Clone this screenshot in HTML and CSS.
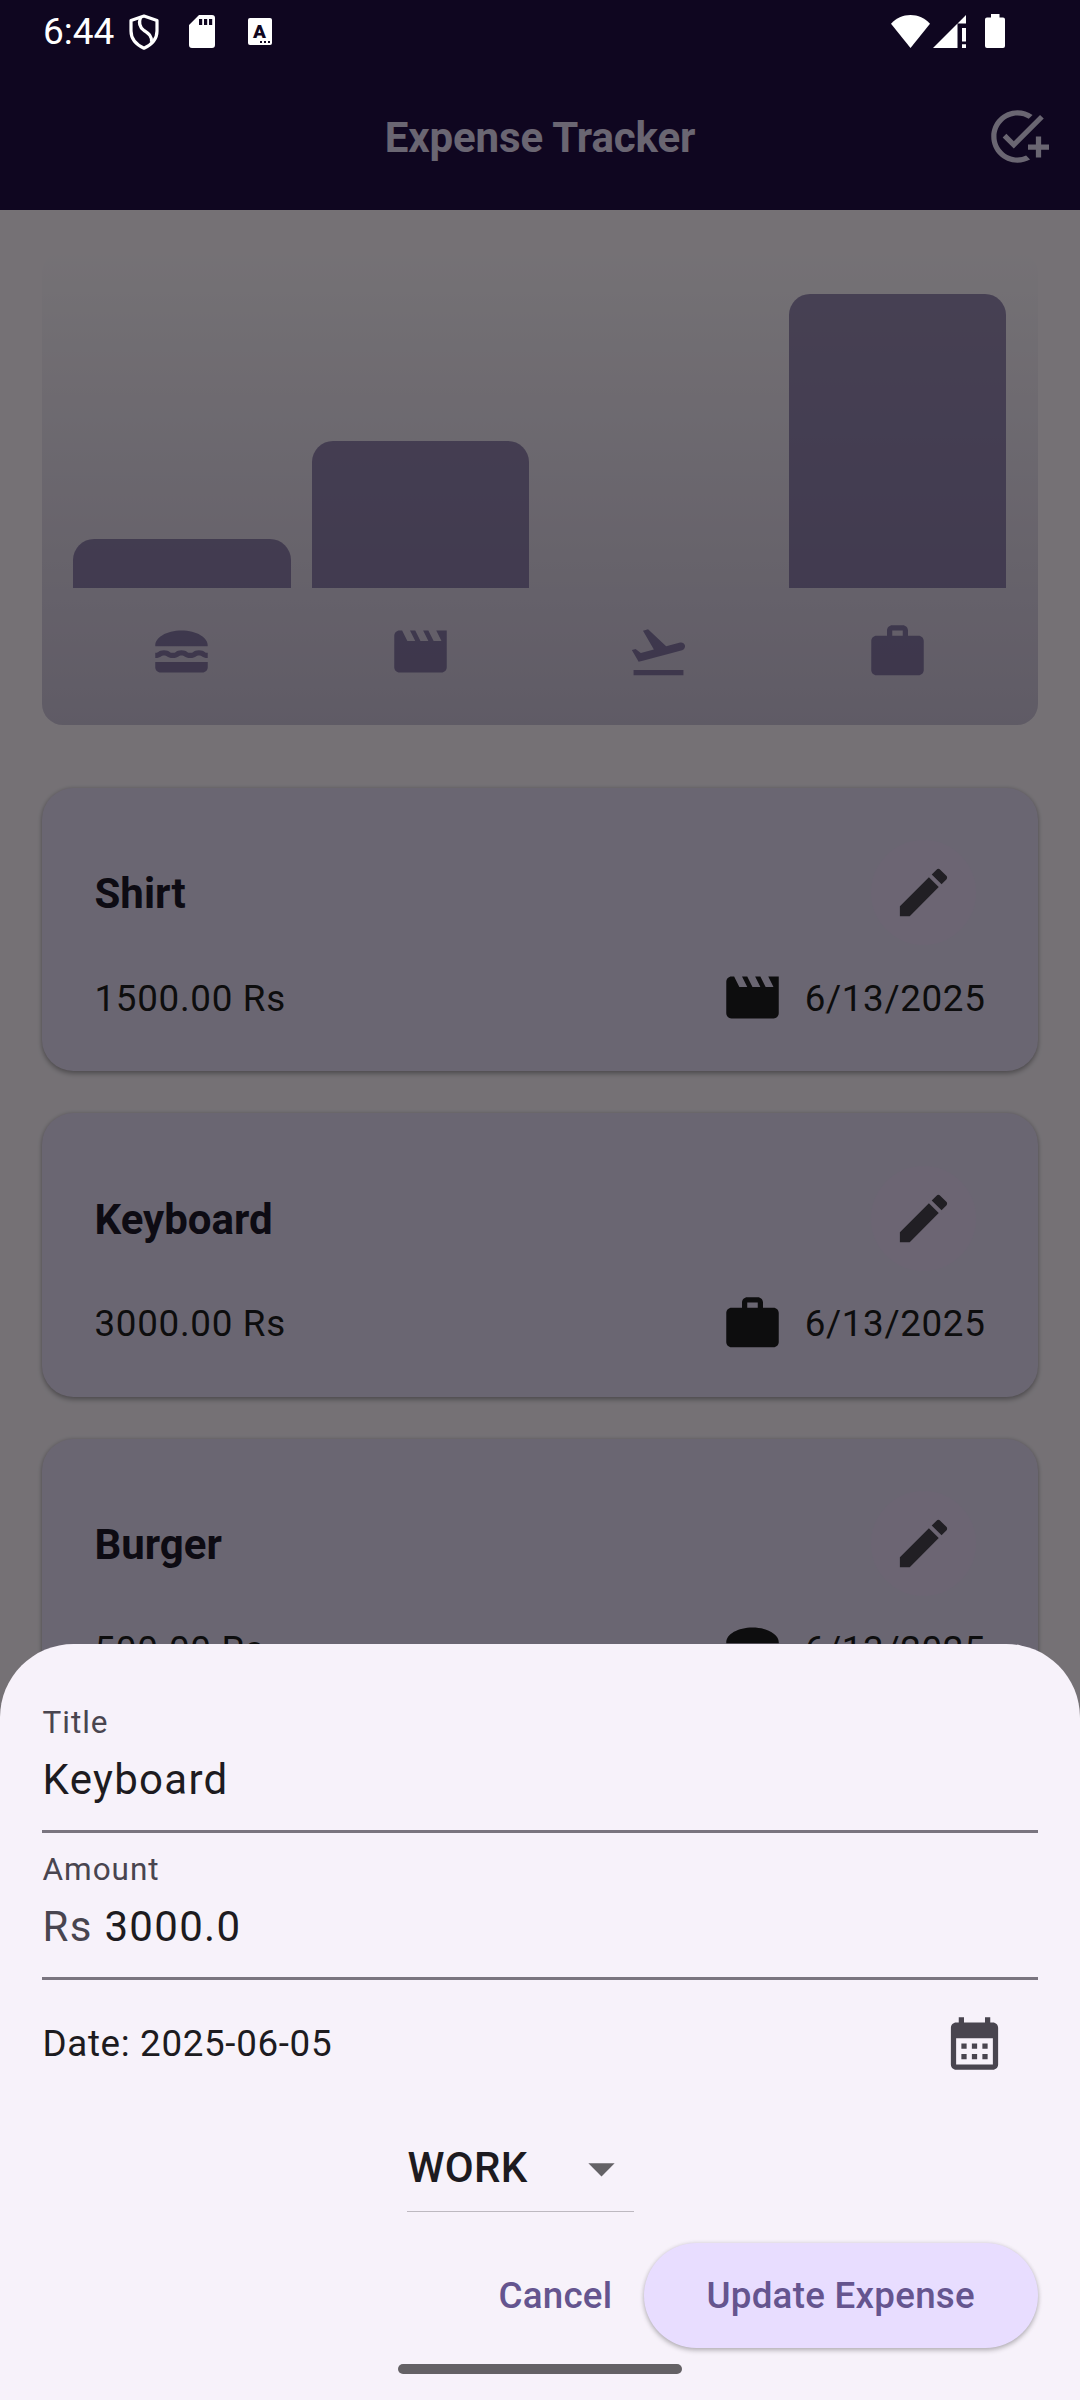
FILE: index.html
```html
<!DOCTYPE html>
<html lang="en">
<head>
<meta charset="utf-8">
<title>Expense Tracker</title>
<link rel="stylesheet" href="styles.css">
</head>
<body>
<svg class="symbols" width="0" height="0" aria-hidden="true">
  <symbol id="i-food" viewBox="0 0 24 24"><path d="M22 10c.32-3.28-4.28-6-9.99-6S1.7 6.72 2.02 10H22zM5.35 13.5c.55 0 .78.14 1.15.36.45.27 1.07.64 2.18.64s1.73-.37 2.18-.64c.37-.23.59-.36 1.15-.36.55 0 .78.14 1.15.36.45.27 1.07.64 2.18.64s1.73-.37 2.18-.64c.37-.23.59-.36 1.15-.36.55 0 .78.14 1.15.36.45.27 1.07.63 2.17.64v-1.98s0 .01-.01 0c-.55 0-.78-.14-1.15-.36-.45-.27-1.07-.64-2.18-.64s-1.73.37-2.18.64c-.37.23-.6.36-1.15.36s-.78-.14-1.15-.36c-.45-.27-1.07-.64-2.18-.64s-1.73.37-2.18.64c-.37.23-.59.36-1.15.36s-.78-.14-1.15-.36c-.45-.27-1.07-.64-2.18-.64s-1.73.37-2.18.64C2.78 12.37 2.56 12.5 2 12.5v2c1.11 0 1.73-.37 2.21-.64.36-.23.59-.36 1.14-.36zM2 16v2c0 1.1.9 2 2 2h16c1.1 0 2-.9 2-2v-2H2z"/></symbol>
  <symbol id="i-movie" viewBox="0 0 24 24"><path d="M18 4l2 4h-3l-2-4h-2l2 4h-3l-2-4H8l2 4H7L5 4H4c-1.1 0-1.99.9-1.99 2L2 18c0 1.1.9 2 2 2h16c1.1 0 2-.9 2-2V4h-4z"/></symbol>
  <symbol id="i-flight" viewBox="0 0 24 24"><path d="M2.5 19h19v2h-19zm19.57-9.36c-.21-.8-1.04-1.28-1.84-1.06L14.92 10l-6.9-6.43-1.93.51 4.14 7.17-4.97 1.33-1.97-1.54-1.45.39 1.82 3.16.77 1.33 1.6-.43 5.31-1.42 4.35-1.16L21 11.49c.81-.23 1.28-1.05 1.07-1.85z"/></symbol>
  <symbol id="i-work" viewBox="0 0 24 24"><path d="M20 6h-4V4c0-1.11-.89-2-2-2h-4c-1.11 0-2 .89-2 2v2H4c-1.11 0-1.99.89-1.99 2L2 19c0 1.11.89 2 2 2h16c1.11 0 2-.89 2-2V8c0-1.11-.89-2-2-2zm-6 0h-4V4h4v2z"/></symbol>
  <symbol id="i-edit" viewBox="0 0 24 24"><path d="M3 17.25V21h3.75L17.81 9.94l-3.75-3.75L3 17.25zM20.71 7.04c.39-.39.39-1.02 0-1.41l-2.34-2.34c-.39-.39-1.02-.39-1.41 0l-1.83 1.83 3.75 3.75 1.83-1.83z"/></symbol>
  <symbol id="i-add-task" viewBox="0 0 24 24"><path d="M22 5.18L10.59 16.6l-4.24-4.24 1.41-1.41 2.83 2.83 10-10L22 5.18zM12 20c-4.41 0-8-3.59-8-8s3.59-8 8-8c1.57 0 3.04.46 4.28 1.25l1.45-1.45C16.1 2.67 14.13 2 12 2 6.48 2 2 6.48 2 12s4.48 10 10 10c1.73 0 3.36-.44 4.78-1.22l-1.5-1.5c-1 .46-2.11.72-3.28.72zm7-5h-3v2h3v3h2v-3h3v-2h-3v-3h-2v3z"/></symbol>
  <symbol id="i-calendar" viewBox="0 0 24 24"><path d="M19 4h-1V2h-2v2H8V2H6v2H5c-1.11 0-1.99.9-1.99 2L3 20c0 1.1.89 2 2 2h14c1.1 0 2-.9 2-2V6c0-1.1-.9-2-2-2zm0 16H5V10h14v10zM9 14H7v-2h2v2zm4 0h-2v-2h2v2zm4 0h-2v-2h2v2zm-8 4H7v-2h2v2zm4 0h-2v-2h2v2zm4 0h-2v-2h2v2z"/></symbol>
  <symbol id="i-drop" viewBox="0 0 24 24"><path d="M7 10l5 5 5-5z"/></symbol>
</svg>

<div class="screen">
  <header class="app-bar">
    <h1 class="app-title">Expense Tracker</h1>
    <svg class="icon app-action"><use href="#i-add-task"/></svg>
  </header>

  <main class="content">
    <section class="chart">
      <div class="bars">
        <div class="bar" style="height:16.667%"></div>
        <div class="bar" style="height:50%"></div>
        <div class="bar" style="height:0%"></div>
        <div class="bar" style="height:100%"></div>
      </div>
      <div class="categories">
        <svg class="icon"><use href="#i-food"/></svg>
        <svg class="icon"><use href="#i-movie"/></svg>
        <svg class="icon"><use href="#i-flight"/></svg>
        <svg class="icon"><use href="#i-work"/></svg>
      </div>
    </section>

    <article class="card">
      <div class="card-head">
        <h2 class="card-title">Shirt</h2>
        <div class="edit"><svg class="icon"><use href="#i-edit"/></svg></div>
      </div>
      <div class="card-row">
        <span class="amount">1500.00 Rs</span>
        <svg class="icon"><use href="#i-movie"/></svg>
        <span class="date">6/13/2025</span>
      </div>
    </article>

    <article class="card">
      <div class="card-head">
        <h2 class="card-title">Keyboard</h2>
        <div class="edit"><svg class="icon"><use href="#i-edit"/></svg></div>
      </div>
      <div class="card-row">
        <span class="amount">3000.00 Rs</span>
        <svg class="icon"><use href="#i-work"/></svg>
        <span class="date">6/13/2025</span>
      </div>
    </article>

    <article class="card">
      <div class="card-head">
        <h2 class="card-title">Burger</h2>
        <div class="edit"><svg class="icon"><use href="#i-edit"/></svg></div>
      </div>
      <div class="card-row">
        <span class="amount">500.00 Rs</span>
        <svg class="icon"><use href="#i-food"/></svg>
        <span class="date">6/13/2025</span>
      </div>
    </article>
  </main>

  <div class="scrim"></div>

  <div class="status-bar">
    <span class="clock">6:44</span>
    <svg class="st-shield" width="30" height="36" viewBox="0 0 30 36" fill="none" stroke="#fff" stroke-width="3.2" stroke-linejoin="round"><path d="M15 2L28 6.500V17C28 25 22 31 15 34.200C8 31 2 25 2 17V6.500Z"/><path d="M11.500 3.500C9.500 9 10 13 15 16.500C20 20 23 22 22.500 28"/></svg>
    <svg class="st-sd" width="26" height="33" viewBox="0 0 26 33"><path fill="#fff" fill-rule="evenodd" d="M10 0H23Q26 0 26 3V30Q26 33 23 33H3Q0 33 0 30V10ZM10 4V10H13.200V4ZM15 4V10H18.200V4ZM20 4V10H23.200V4Z"/></svg>
    <span class="st-lang">A<i class="st-dots"></i></span>
    <span class="st-gap"></span>
    <svg class="st-wifi" width="39" height="33" viewBox="0 0 39 33"><path fill="#fff" d="M19.500 33L0 8.800C5 3 12 0 19.500 0S34 3 39 8.800Z"/></svg>
    <svg class="st-signal" width="33" height="33" viewBox="0 0 33 33"><path fill="#fff" d="M0 33L24.500 8.500V33ZM33 0V8.500H24.500ZM29 13H33V26.500H29ZM29 29.300H33V33H29Z"/></svg>
    <svg class="st-battery" width="20" height="34" viewBox="0 0 20 34"><path fill="#fff" d="M6 0H14.500V3.500H18Q20 3.500 20 5.500V32Q20 34 18 34H2Q0 34 0 32V5.500Q0 3.500 2 3.500H6Z"/></svg>
  </div>

  <section class="sheet">
    <div class="field">
      <label class="label">Title</label>
      <div class="value">Keyboard</div>
    </div>
    <div class="field">
      <label class="label">Amount</label>
      <div class="value"><span class="prefix">Rs </span>3000.0</div>
    </div>
    <div class="date-row">
      <span class="date-text">Date: 2025-06-05</span>
      <div class="date-button"><svg class="icon"><use href="#i-calendar"/></svg></div>
    </div>
    <div class="select-row">
      <div class="select">
        <span class="select-text">WORK</span>
        <svg class="icon"><use href="#i-drop"/></svg>
      </div>
    </div>
    <div class="actions">
      <button class="btn btn-text">Cancel</button>
      <button class="btn btn-fill">Update Expense</button>
    </div>
    <div class="home-bar"></div>
  </section>
</div>
</body>
</html>
```
FILE: styles.css
```css
* { box-sizing: border-box; }

body {
  margin: 0;
  font-family: Roboto, sans-serif;
}

h1, h2 { margin: 0; }

.symbols { position: absolute; }

.screen {
  position: relative;
  width: 1080px;
  height: 2400px;
  overflow: hidden;
  background: #fef7ff;
}

.icon {
  display: block;
  flex: none;
  width: 63px;
  height: 63px;
  fill: currentColor;
}

/* App bar */
.app-bar {
  display: grid;
  grid-template-columns: 1fr auto 1fr;
  align-items: center;
  height: 210px;
  padding: 63px 31px 0;
  background: #210f46;
  color: #e8def8;
}
.app-title {
  grid-column: 2;
  padding-top: 2px;
  font-size: 42px;
  font-weight: 700;
  letter-spacing: -.1px;
  line-height: 56px;
}
.app-action { justify-self: end; }

.content { padding: 42px; }

/* Chart */
.chart {
  display: flex;
  flex-direction: column;
  gap: 31.500px;
  height: 472.500px;
  margin-bottom: 63px;
  padding: 42px 32px 42px 31px;
  border-radius: 21px;
  background: linear-gradient(to top, rgba(101, 85, 143, .3), rgba(101, 85, 143, 0));
}
.bars {
  display: grid;
  grid-template-columns: repeat(4, 1fr);
  gap: 21px;
  align-items: end;
  height: 294px;
}
.bar {
  border-radius: 21px 21px 0 0;
  background: rgba(101, 85, 143, .65);
}
.categories {
  display: grid;
  grid-template-columns: repeat(4, 1fr);
  gap: 21px;
  justify-items: center;
  color: rgba(101, 85, 143, .7);
}

/* Expense cards */
.card {
  height: 283.500px;
  margin-bottom: 42px;
  padding: 42px 52.500px;
  border-radius: 31.500px;
  background: #e8def8;
  box-shadow: 0 2.600px 5px rgba(0, 0, 0, .28), 0 0 4px rgba(0, 0, 0, .12);
}
.card-head {
  display: flex;
  align-items: center;
  justify-content: space-between;
  height: 126px;
  margin-bottom: 10.500px;
}
.card-title {
  padding-top: 2px;
  color: #1d192b;
  font-size: 42px;
  font-weight: 700;
}
.edit {
  display: grid;
  place-items: center;
  width: 105px;
  height: 105px;
  margin-right: 10px;
  border-radius: 50%;
  background: #ebdcfb;
  color: #49454f;
}
.card-row {
  display: flex;
  align-items: center;
  gap: 21px;
  color: #1e1d20;
  font-size: 36.750px;
  letter-spacing: .7px;
}
.amount {
  flex: 1;
  padding-top: 1px;
}
.date {
  padding-top: 1px;
  letter-spacing: .66px;
}

.scrim {
  position: absolute;
  inset: 0;
  background: rgba(0, 0, 0, .54);
}

/* System status bar, drawn above the scrim */
.status-bar {
  position: absolute;
  top: 0;
  left: 0;
  display: flex;
  width: 1080px;
  height: 63px;
  padding: 0 75px 0 43px;
  align-items: center;
  color: #fff;
}
.clock {
  width: 86px;
  font-size: 37px;
}
.st-sd { margin-left: 29.500px; }
.st-lang {
  position: relative;
  width: 24px;
  height: 27px;
  margin-left: 33px;
  border-radius: 2px;
  background: #fff;
  color: #0f0620;
  font-size: 19px;
  font-weight: 900;
  line-height: 27px;
  text-align: center;
}
.st-dots {
  position: absolute;
  right: 1.500px;
  bottom: 2px;
  width: 10px;
  height: 2px;
  background: repeating-linear-gradient(to right, #0f0620 0 2px, transparent 2px 4px);
}
.st-gap { flex: 1; }
.st-wifi, .st-signal, .st-battery { margin-bottom: 1px; }
.st-signal { margin-left: 3px; }
.st-battery { margin-left: 19px; }

/* Bottom sheet */
.sheet {
  position: absolute;
  right: 0;
  bottom: 0;
  left: 0;
  height: 756px;
  padding: 42px 42px 0;
  border-radius: 73.500px 73.500px 0 0;
  background: #f7f2fa;
  color: #1d1b20;
}
.field {
  height: 147px;
  padding-top: 18px;
  border-bottom: 3px solid #7a757f;
}
.label {
  display: block;
  padding-left: .5px;
  color: #49454f;
  font-size: 31.500px;
  letter-spacing: .98px;
  line-height: 38px;
}
.value {
  margin-top: 10px;
  padding-left: .5px;
  font-size: 42px;
  letter-spacing: 1.310px;
  line-height: 56px;
  white-space: pre;
}
.prefix { color: #49454f; }
.date-row {
  display: flex;
  align-items: center;
  justify-content: space-between;
  height: 126px;
}
.date-text {
  padding-left: .5px;
  font-size: 36.750px;
  letter-spacing: .66px;
}
.date-button {
  display: grid;
  place-items: center;
  width: 127px;
  height: 126px;
  color: #49454f;
}
.select-row {
  height: 126px;
  padding: 0 0 20px 365px;
}
.select {
  display: flex;
  align-items: center;
  justify-content: space-between;
  width: 227px;
  height: 106px;
  padding-top: 20px;
  border-bottom: 1px solid #bdb9c0;
}
.select-text {
  padding: 0 0 2px .5px;
  font-size: 42px;
  font-weight: 500;
  letter-spacing: .26px;
}
.select .icon {
  margin-right: 1px;
  color: #646266;
}
.actions {
  display: flex;
  justify-content: flex-end;
  padding-top: 10.500px;
}
.btn {
  height: 105px;
  border: 0;
  border-radius: 52.500px;
  background: none;
  color: #65558f;
  font-family: inherit;
  font-size: 36.750px;
  font-weight: 500;
  letter-spacing: .26px;
}
.btn-text { padding: 0 31.500px; }
.btn-fill {
  padding: 0 63px 0 62.500px;
  background: #e8ddff;
  box-shadow: 0 2.600px 5px rgba(0, 0, 0, .24), 0 0 4px rgba(0, 0, 0, .1);
}
.home-bar {
  width: 283.500px;
  height: 10px;
  margin: 16.500px auto 0;
  border-radius: 5px;
  background: #646165;
}
```
